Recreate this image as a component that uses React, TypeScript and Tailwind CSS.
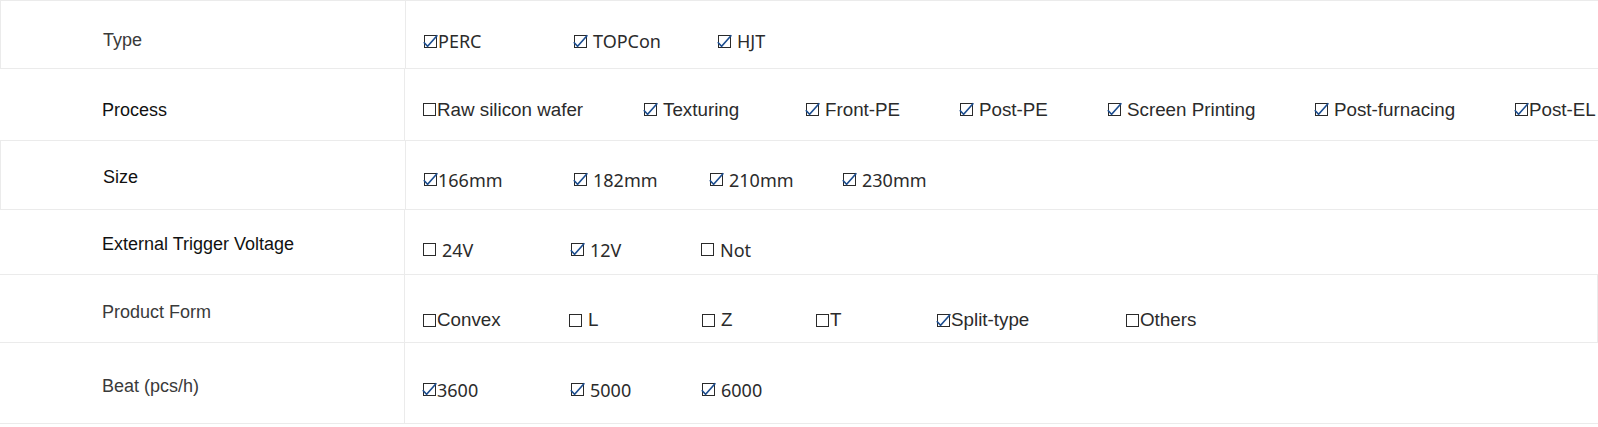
import React from "react";

interface IOption {
  text: string;
  checked: boolean;
  spaced?: boolean;
  width?: number;
}

interface IRow {
  label: string;
  labelClass: string;
  font: "noto" | "arial";
  height: string;
  labelPad: string;
  valuePad: string;
  border?: string;
  valueBorder?: string;
  options: IOption[];
}

const rows: IRow[] = [
  {
    label: "Type",
    labelClass: "text-[#3a3a3a]",
    font: "noto",
    height: "h-[69px]",
    labelPad: "pt-[11px]",
    valuePad: "pt-[13px]",
    border: "border-l border-t",
    options: [
      { text: "PERC", checked: true, width: 150 },
      { text: "TOPCon", checked: true, spaced: true, width: 144 },
      { text: "HJT", checked: true, spaced: true },
    ],
  },
  {
    label: "Process",
    labelClass: "text-[#111]",
    font: "arial",
    height: "h-[72px]",
    labelPad: "pt-[12px]",
    valuePad: "pt-[11px]",
    options: [
      { text: "Raw silicon wafer", checked: false, width: 221 },
      { text: "Texturing", checked: true, spaced: true, width: 162 },
      { text: "Front-PE", checked: true, spaced: true, width: 154 },
      { text: "Post-PE", checked: true, spaced: true, width: 148 },
      { text: "Screen Printing", checked: true, spaced: true, width: 207 },
      { text: "Post-furnacing", checked: true, spaced: true, width: 200 },
      { text: "Post-EL", checked: true },
    ],
  },
  {
    label: "Size",
    labelClass: "text-[#111]",
    font: "noto",
    height: "h-[69px]",
    labelPad: "pt-[4px]",
    valuePad: "pt-[9px]",
    border: "border-l",
    options: [
      { text: "166mm", checked: true, width: 150 },
      { text: "182mm", checked: true, spaced: true, width: 136 },
      { text: "210mm", checked: true, spaced: true, width: 133 },
      { text: "230mm", checked: true, spaced: true },
    ],
  },
  {
    label: "External Trigger Voltage",
    labelClass: "text-[#111]",
    font: "noto",
    height: "h-[65px]",
    labelPad: "pt-[4px]",
    valuePad: "pt-[15px]",
    options: [
      { text: "24V", checked: false, spaced: true, width: 148 },
      { text: "12V", checked: true, spaced: true, width: 130 },
      { text: "Not", checked: false, spaced: true },
    ],
  },
  {
    label: "Product Form",
    labelClass: "text-[#3a3a3a]",
    font: "arial",
    height: "h-[68px]",
    labelPad: "pt-[7px]",
    valuePad: "pt-[24px]",
    valueBorder: "border-r",
    options: [
      { text: "Convex", checked: false, width: 146 },
      { text: "L", checked: false, spaced: true, width: 133 },
      { text: "Z", checked: false, spaced: true, width: 114 },
      { text: "T", checked: false, width: 121 },
      { text: "Split-type", checked: true, width: 189 },
      { text: "Others", checked: false },
    ],
  },
  {
    label: "Beat (pcs/h)",
    labelClass: "text-[#3a3a3a]",
    font: "noto",
    height: "h-[81px]",
    labelPad: "pt-[7px]",
    valuePad: "pt-[13px]",
    options: [
      { text: "3600", checked: true, width: 148 },
      { text: "5000", checked: true, spaced: true, width: 131 },
      { text: "6000", checked: true, spaced: true },
    ],
  },
];

const Box = ({ checked }: { checked: boolean }) => (
  <svg width="15" height="15" viewBox="0 0 15 15" className="shrink-0">
    <rect x="1.5" y="1.5" width="12" height="12" fill="none" stroke="#2a2a2a" strokeWidth="1" />
    {checked && (
      <polyline
        points="0.8,8.2 4.6,12.2 14.4,1.2"
        fill="none"
        stroke="#1c4d8f"
        strokeWidth="1.6"
      />
    )}
  </svg>
);

export default function App() {
  return (
    <div className="w-[1598px] h-[427px] bg-white overflow-hidden">
      {rows.map((row) => (
        <div
          key={row.label}
          className={`flex ${row.height} border-b border-[#ebebeb] ${
            row.border ? row.border : ""
          }`}
        >
          <div
            className={`w-[405px] shrink-0 flex items-center pl-[102px] border-r border-[#ebebeb] ${row.labelPad} ${row.labelClass} text-[18px]`}
            style={{ fontFamily: '"Liberation Sans", Arial, sans-serif' }}
          >
            {row.label}
          </div>
          <div
            className={`flex-1 flex items-center pl-[17px] text-[#2b2b2b] ${row.valuePad} ${
              row.valueBorder ? "border-r border-[#ebebeb]" : ""
            }`}
            style={{
              fontFamily:
                row.font === "noto"
                  ? '"Noto Sans", "Open Sans", sans-serif'
                  : '"Liberation Sans", Arial, sans-serif',
            }}
          >
            {row.options.map((o) => (
              <span
                key={o.text}
                className={`flex items-center shrink-0 whitespace-nowrap leading-none ${
                  row.font === "noto" ? "text-[18px]" : "text-[18.8px]"
                }`}
                style={o.width ? { width: o.width } : undefined}
              >
                <Box checked={o.checked} />
                <span className={o.spaced ? "ml-[5px]" : "ml-[0px]"}>{o.text}</span>
              </span>
            ))}
          </div>
        </div>
      ))}
    </div>
  );
}
